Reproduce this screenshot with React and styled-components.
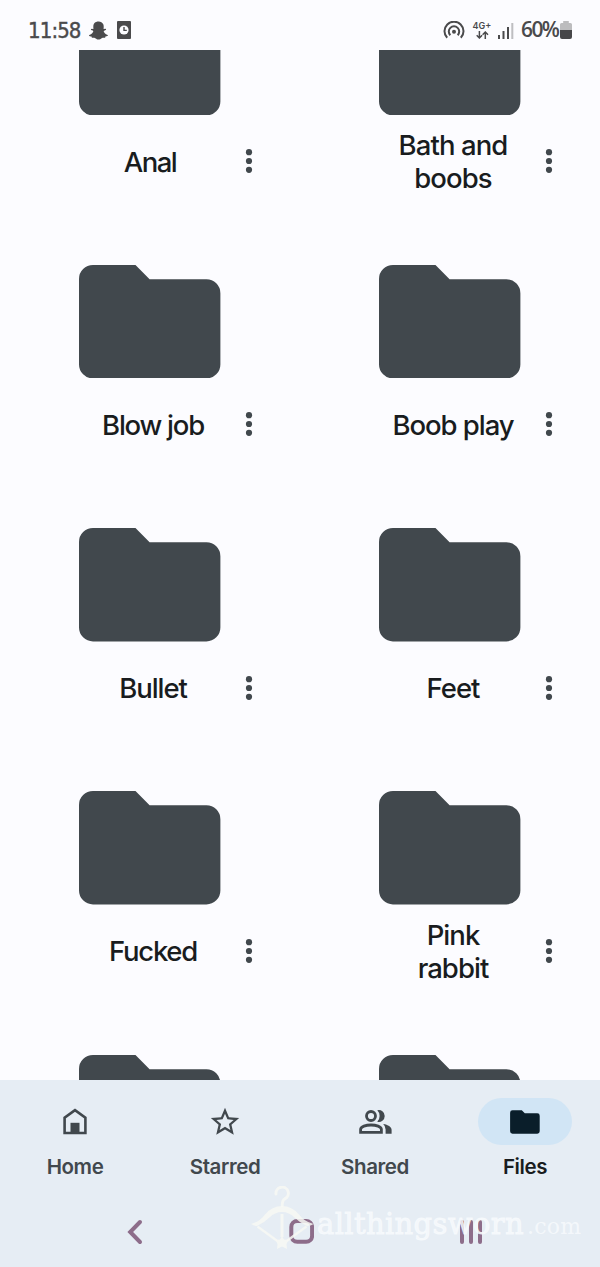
import styled, { createGlobalStyle } from 'styled-components';
import { FaSnapchatGhost } from 'react-icons/fa';
import { MdStarBorder } from 'react-icons/md';

const folders = [
  { name: 'Anal', spacing: -1.5, shift: -3 },
  { name: 'Bath and boobs', spacing: -0.9 },
  { name: 'Blow job', spacing: -1.25 },
  { name: 'Boob play', spacing: -1.05 },
  { name: 'Bullet', spacing: -1.05 },
  { name: 'Feet', spacing: -0.95 },
  { name: 'Fucked', spacing: -1.3 },
  { name: 'Pink rabbit', spacing: -0.95 },
  { name: '' },
  { name: '' },
];

const HomeIcon = () => (
  <svg width='24' height='27' viewBox='0 0 24 27'>
    <path d='M1.6 25V9.6L12 2.1l10.4 7.5V25z' fill='none' stroke='currentColor' strokeWidth='2.6' />
    <path d='M7.5 14.8h9V26h-9z' fill='currentColor' />
  </svg>
);

const SharedIcon = () => (
  <svg width='33' height='24' viewBox='0 0 33 24'>
    <circle cx='12' cy='6' r='4.5' fill='none' stroke='currentColor' strokeWidth='2.8' />
    <path
      d='M1.6 22.4V19.5C1.6 16.6 7 15 12 15S22.4 16.6 22.4 19.5V22.4z'
      fill='none'
      stroke='currentColor'
      strokeWidth='2.8'
    />
    <path d='M18.3.3A5.9 5.9 0 1 1 18.3 11.7Q20.6 9.5 20.6 6T18.3.3z' fill='currentColor' />
    <path d='M24.2 13.9C29 14.7 32.6 16.8 32.6 19.8V23.8H26.6V19.5Q26.6 15.9 24.2 13.9z' fill='currentColor' />
  </svg>
);

const FilesIcon = () => (
  <svg width='30' height='24' viewBox='0 0 30 24'>
    <path
      d='M2.5.3h9.3l3 3H27.3A2.4 2.4 0 0 1 29.7 5.7v15.6a2.4 2.4 0 0 1-2.4 2.4H2.5A2.4 2.4 0 0 1 .1 21.3V2.7A2.4 2.4 0 0 1 2.5.3z'
      fill='currentColor'
    />
  </svg>
);

const tabs = [
  { label: 'Home', icon: <HomeIcon /> },
  { label: 'Starred', icon: <MdStarBorder size={34} /> },
  { label: 'Shared', icon: <SharedIcon /> },
  { label: 'Files', icon: <FilesIcon />, active: true },
];

const FolderShape = () => (
  <svg width='141.4' height='113.4' viewBox='0 0 141.4 113.4'>
    <path
      d='M14 0h42.5L70.6 14.2h56.8a14 14 0 0 1 14 14v71.2a14 14 0 0 1-14 14H14a14 14 0 0 1-14-14V14A14 14 0 0 1 14 0z'
      fill='#41484d'
    />
  </svg>
);

const MoreIcon = () => (
  <svg width='8' height='26' viewBox='0 0 8 26'>
    <circle cx='4' cy='4.2' r='3.1' fill='#41484d' />
    <circle cx='4' cy='13' r='3.1' fill='#41484d' />
    <circle cx='4' cy='21.8' r='3.1' fill='#41484d' />
  </svg>
);

const StatusBar = () => (
  <StatusContainer>
    <Clock>11:58</Clock>
    <FaSnapchatGhost size={19} />
    <svg width='14' height='18' viewBox='0 0 14 18' className='alarm'>
      <rect width='14' height='18' rx='1' fill='currentColor' />
      <circle cx='7' cy='9' r='4.6' fill='#fcfcff' />
      <path d='M7 6v3.4h2.8' fill='none' stroke='currentColor' strokeWidth='1.4' />
    </svg>
    <StatusRight>
      <svg width='22' height='18' viewBox='0 0 22 18' fill='none' stroke='currentColor' strokeWidth='2'>
        <path d='M4.2 16.8A9.5 9.5 0 1 1 17.8 16.8' />
        <path d='M7.3 14.2A5.2 5.2 0 1 1 14.7 14.2' />
        <circle cx='11' cy='10.7' r='2' fill='currentColor' stroke='none' />
      </svg>
      <Network>
        <span>4G+</span>
        <svg width='13' height='8' viewBox='0 0 13 8' fill='none' stroke='currentColor' strokeWidth='1.5'>
          <path d='M3.4 0v7M.7 4.3l2.7 2.7 2.7-2.7M9.3 8V1M6.6 3.7L9.3 1 12 3.7' />
        </svg>
      </Network>
      <svg width='16' height='17' viewBox='0 0 16 17' fill='currentColor'>
        <rect x='0' y='13' width='2' height='4' />
        <rect x='4.5' y='9' width='2' height='8' />
        <rect x='9' y='5' width='2' height='12' />
        <rect x='13.3' y='1' width='2' height='16' opacity='.35' />
      </svg>
      <Battery>60%</Battery>
      <svg width='12' height='18' viewBox='0 0 12 18'>
        <path d='M3.2 0h5.6v2H10.5A1.5 1.5 0 0 1 12 3.5V9H0V3.5A1.5 1.5 0 0 1 1.5 2H3.2z' fill='#bcbcbe' />
        <path d='M0 9h12v7a2 2 0 0 1-2 2H2a2 2 0 0 1-2-2z' fill='#47474a' />
      </svg>
    </StatusRight>
  </StatusContainer>
);

const Folder = ({ folder }) => (
  <FolderCell>
    <FolderShape />
    {folder.name && (
      <FolderFooter>
        <FolderName $spacing={folder.spacing} $shift={folder.shift}>
          {folder.name}
        </FolderName>
        <MoreButton>
          <MoreIcon />
        </MoreButton>
      </FolderFooter>
    )}
  </FolderCell>
);

const App = () => {
  return (
    <Screen>
      <GlobalStyle />
      <StatusBar />
      <FolderList>
        <FolderGrid>
          {folders.map((folder, index) => (
            <Folder key={index} folder={folder} />
          ))}
        </FolderGrid>
      </FolderList>

      <BottomArea>
        <TabBar>
          {tabs.map((tab) => (
            <Tab key={tab.label} $active={tab.active}>
              <TabIcon $active={tab.active}>{tab.icon}</TabIcon>
              <span>{tab.label}</span>
            </Tab>
          ))}
        </TabBar>
        <SystemBar>
          <svg width='16' height='26' viewBox='0 0 16 26'>
            <path d='M13 3L3.2 13L13 23' />
          </svg>
          <svg width='26' height='26' viewBox='0 0 26 26'>
            <rect x='3.3' y='2' width='20.8' height='20.8' rx='6' />
          </svg>
          <svg width='24' height='26' viewBox='0 0 24 26'>
            <path d='M3 3v20M12 3v20M21 3v20' />
          </svg>
        </SystemBar>
        <Watermark>
          <svg width='66' height='66' viewBox='0 0 66 66' fill='none' stroke='currentColor'>
            <path d='M25 8A6.2 6.2 0 1 1 33.6 13Q31.2 14.5 31.2 20' strokeWidth='3' strokeLinecap='round' />
            <path
              d='M0 38Q9 35.500 14 28.500Q21 20 31 20T48 28.500Q53 35.500 62.500 38Q60 40 56 40Q49 37 43.500 31.500Q38 26 31 26T18.500 31.500Q13 37 6 40Q3 40 0 38z'
              fill='currentColor'
              stroke='none'
            />
            <path d='M6.500 40.500L26 54.800M55.500 40.500L36 54.800' strokeWidth='2.4' />
            <path d='M31 28v23' strokeWidth='3' />
            <path d='M31 50l2 3.500 4.500.5-2 4 .5 5-5-2.500-5 2.500.5-5-2-4 4.500-.5z' fill='currentColor' stroke='none' />
          </svg>
          <WatermarkName>allthingsworn</WatermarkName>
          <WatermarkDomain>.com</WatermarkDomain>
        </Watermark>
      </BottomArea>
    </Screen>
  );
};

export default App;

const GlobalStyle = createGlobalStyle`
  * {
    box-sizing: border-box;
  }
  body {
    margin: 0;
    background: #fcfcff;
    font-family: Inter, 'Liberation Sans', sans-serif;
  }
  svg {
    display: block;
    flex-shrink: 0;
  }
`;

const Screen = styled.div`
  display: flex;
  flex-direction: column;
  width: 600px;
  height: 1267px;
  overflow: hidden;
  background: #fcfcff;
`;

const StatusContainer = styled.div`
  display: flex;
  align-items: center;
  height: 50px;
  padding: 10px 28px 0 28px;
  color: #4a4a4c;
  .alarm {
    margin-left: 9px;
  }
`;

const Clock = styled.div`
  width: 60.5px;
  font-family: 'DejaVu Sans Condensed', 'DejaVu Sans', sans-serif;
  font-size: 22px;
  letter-spacing: -0.9px;
  white-space: nowrap;
  -webkit-text-stroke: 0.4px currentColor;
`;

const StatusRight = styled.div`
  display: flex;
  align-items: center;
  margin-left: auto;
`;

const Network = styled.div`
  display: flex;
  flex-direction: column;
  align-items: center;
  gap: 1px;
  width: 20px;
  margin: 0 6px 0 7px;
  span {
    font-size: 9px;
    font-weight: 600;
    line-height: 9px;
  }
`;

const Battery = styled.div`
  width: 38px;
  margin-left: 7px;
  margin-right: 1px;
  padding-bottom: 2px;
  font-family: 'Open Sans', sans-serif;
  font-size: 21px;
  font-weight: 600;
  letter-spacing: -1.6px;
  white-space: nowrap;
`;

const FolderList = styled.div`
  flex: 1;
  min-height: 0;
  overflow: hidden;
`;

const FolderGrid = styled.div`
  display: grid;
  grid-template-columns: 300px 300px;
  grid-auto-rows: 263.2px;
  margin-top: -48.2px;
`;

const FolderCell = styled.div`
  display: flex;
  flex-direction: column;
  align-items: center;
`;

const FolderFooter = styled.div`
  display: grid;
  grid-template-columns: 150px 40px;
  justify-content: end;
  align-items: center;
  width: 300px;
  height: 92px;
  padding-right: 31px;
`;

const FolderName = styled.div`
  justify-self: center;
  max-width: 126px;
  margin-left: ${(props) => (props.$shift || 0) * 2 - 2}px;
  padding-top: 1.6px;
  color: #191c1e;
  font-size: 27.5px;
  font-weight: 450;
  line-height: 33px;
  letter-spacing: ${(props) => props.$spacing}px;
  text-align: center;
`;

const MoreButton = styled.div`
  display: flex;
  justify-content: center;
`;

const BottomArea = styled.div`
  position: relative;
  height: 187px;
  background: #e6edf4;
`;

const TabBar = styled.div`
  display: grid;
  grid-template-columns: repeat(4, 1fr);
  height: 116px;
  padding-top: 18px;
`;

const Tab = styled.div`
  display: flex;
  flex-direction: column;
  align-items: center;
  gap: 10px;
  color: ${(props) => (props.$active ? '#191c1e' : '#41484d')};
  font-size: 20.5px;
  font-weight: 600;
  line-height: 24px;
  letter-spacing: -0.4px;
`;

const TabIcon = styled.div`
  display: flex;
  align-items: center;
  justify-content: center;
  width: 94px;
  height: 47px;
  border-radius: 24px;
  color: ${(props) => (props.$active ? '#0a1e2a' : '#41484d')};
  background: ${(props) => (props.$active ? '#d1e5f5' : 'transparent')};
`;

const SystemBar = styled.div`
  display: flex;
  justify-content: space-between;
  align-items: center;
  height: 71px;
  padding: 0 117px 0 127px;
  svg {
    fill: none;
    stroke: #8d6d8a;
    stroke-width: 4;
    stroke-linecap: round;
  }
`;

const Watermark = styled.div`
  position: absolute;
  left: 251px;
  top: 106px;
  display: flex;
  align-items: baseline;
  color: rgba(248, 251, 253, 0.8);
  font-family: 'DejaVu Serif', serif;
  white-space: nowrap;
  svg {
    align-self: flex-start;
    color: rgba(247, 248, 243, 0.85);
  }
`;

const WatermarkName = styled.span`
  width: 210px;
  margin-left: 0;
  font-size: 29px;
  line-height: 76px;
  letter-spacing: 0.35px;
  -webkit-text-stroke: 0.9px currentColor;
`;

const WatermarkDomain = styled.span`
  font-size: 22px;
  letter-spacing: 0.2px;
`;
